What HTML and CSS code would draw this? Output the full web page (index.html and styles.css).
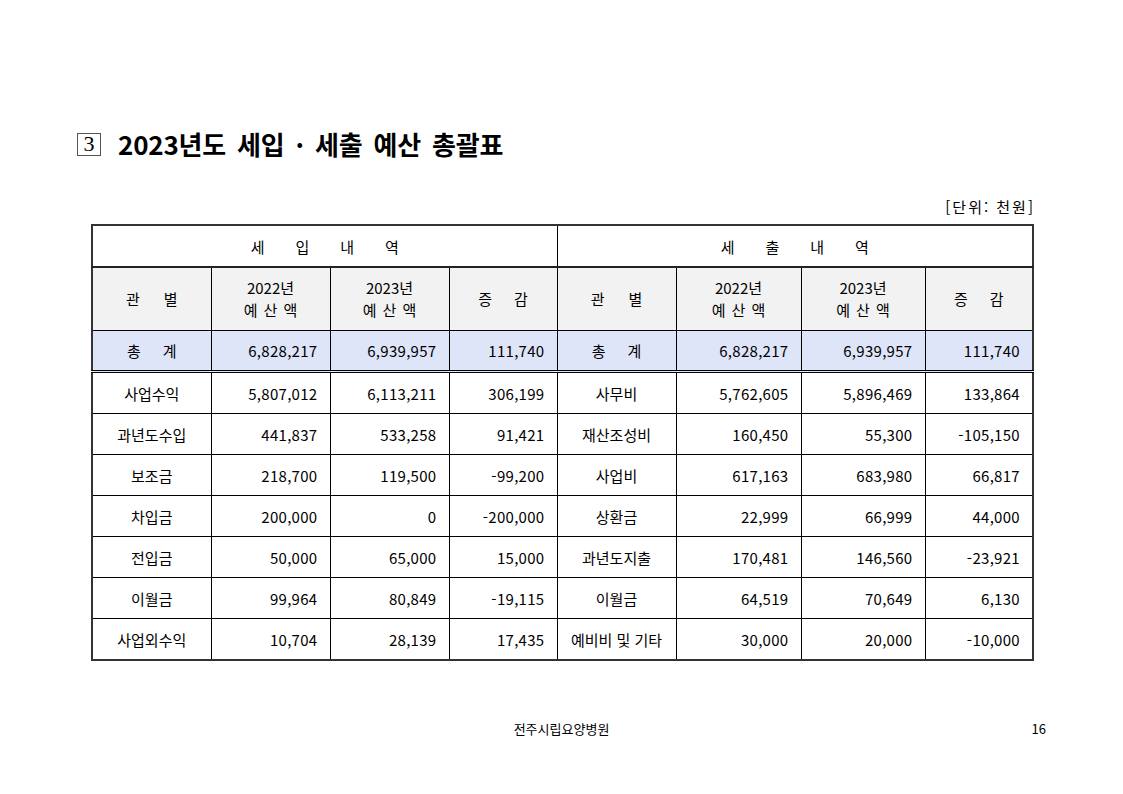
FILE: index.html
```html
<!DOCTYPE html>
<html lang="ko">
<head>
<meta charset="utf-8">
<title>2023년도 세입 · 세출 예산 총괄표</title>
<link rel="stylesheet" href="styles.css">
</head>
<body>
<div class="page">
  <h1 class="title"><span class="num-box">3</span><span class="title-text">2023년도 세입 · 세출 예산 총괄표</span></h1>
  <div class="unit">[단위: 천원]</div>
  <table class="budget">
    <colgroup>
      <col class="c1"><col class="c2"><col class="c3"><col class="c4">
      <col class="c5"><col class="c6"><col class="c7"><col class="c8">
    </colgroup>
    <thead>
      <tr class="sect">
        <th colspan="4"><span class="sp sp-wide"><span>세</span><span>입</span><span>내</span><span>역</span></span></th>
        <th colspan="4"><span class="sp sp-wide"><span>세</span><span>출</span><span>내</span><span>역</span></span></th>
      </tr>
      <tr class="head">
        <th><span class="sp sp-mid"><span>관</span><span>별</span></span></th>
        <th>2022년<br><span class="sp sp-small"><span>예</span><span>산</span><span>액</span></span></th>
        <th>2023년<br><span class="sp sp-small"><span>예</span><span>산</span><span>액</span></span></th>
        <th><span class="sp sp-mid2"><span>증</span><span>감</span></span></th>
        <th><span class="sp sp-mid"><span>관</span><span>별</span></span></th>
        <th>2022년<br><span class="sp sp-small"><span>예</span><span>산</span><span>액</span></span></th>
        <th>2023년<br><span class="sp sp-small"><span>예</span><span>산</span><span>액</span></span></th>
        <th><span class="sp sp-mid2"><span>증</span><span>감</span></span></th>
      </tr>
      <tr class="total">
        <td class="lbl"><span class="sp sp-mid2"><span>총</span><span>계</span></span></td>
        <td class="n">6,828,217</td>
        <td class="n">6,939,957</td>
        <td class="n">111,740</td>
        <td class="lbl"><span class="sp sp-mid2"><span>총</span><span>계</span></span></td>
        <td class="n">6,828,217</td>
        <td class="n">6,939,957</td>
        <td class="n">111,740</td>
      </tr>
    </thead>
    <tbody>
      <tr class="first">
        <td class="lbl">사업수익</td><td class="n">5,807,012</td><td class="n">6,113,211</td><td class="n">306,199</td>
        <td class="lbl">사무비</td><td class="n">5,762,605</td><td class="n">5,896,469</td><td class="n">133,864</td>
      </tr>
      <tr>
        <td class="lbl">과년도수입</td><td class="n">441,837</td><td class="n">533,258</td><td class="n">91,421</td>
        <td class="lbl">재산조성비</td><td class="n">160,450</td><td class="n">55,300</td><td class="n">-105,150</td>
      </tr>
      <tr>
        <td class="lbl">보조금</td><td class="n">218,700</td><td class="n">119,500</td><td class="n">-99,200</td>
        <td class="lbl">사업비</td><td class="n">617,163</td><td class="n">683,980</td><td class="n">66,817</td>
      </tr>
      <tr>
        <td class="lbl">차입금</td><td class="n">200,000</td><td class="n">0</td><td class="n">-200,000</td>
        <td class="lbl">상환금</td><td class="n">22,999</td><td class="n">66,999</td><td class="n">44,000</td>
      </tr>
      <tr>
        <td class="lbl">전입금</td><td class="n">50,000</td><td class="n">65,000</td><td class="n">15,000</td>
        <td class="lbl">과년도지출</td><td class="n">170,481</td><td class="n">146,560</td><td class="n">-23,921</td>
      </tr>
      <tr>
        <td class="lbl">이월금</td><td class="n">99,964</td><td class="n">80,849</td><td class="n">-19,115</td>
        <td class="lbl">이월금</td><td class="n">64,519</td><td class="n">70,649</td><td class="n">6,130</td>
      </tr>
      <tr>
        <td class="lbl">사업외수익</td><td class="n">10,704</td><td class="n">28,139</td><td class="n">17,435</td>
        <td class="lbl">예비비 및 기타</td><td class="n">30,000</td><td class="n">20,000</td><td class="n">-10,000</td>
      </tr>
    </tbody>
  </table>
  <footer class="footer">
    <span class="org">전주시립요양병원</span>
    <span class="pageno">16</span>
  </footer>
</div>
</body>
</html>
```

FILE: styles.css
```css
html, body {
  margin: 0;
  padding: 0;
  background: #fff;
}
body {
  font-family: "Noto Sans CJK KR", "Noto Sans", sans-serif;
  color: #000;
}
.page {
  width: 1123px;
  height: 794px;
  box-sizing: border-box;
  padding: 128px 91px 0 91px;
  position: relative;
}
.title {
  margin: 0 0 0 -14px;
  display: flex;
  align-items: center;
  gap: 17px;
  font-size: 26px;
  font-weight: 700;
  line-height: 32px;
  height: 32px;
}
.num-box {
  display: inline-flex;
  align-items: center;
  justify-content: center;
  width: 22px;
  height: 21px;
  border: 1px solid #555;
  font-family: "Liberation Serif", serif;
  font-weight: 400;
  font-size: 22px;
  line-height: 1;
}
.title-text {
  word-spacing: 4px;
  letter-spacing: -0.2px;
}
.unit {
  margin-top: 38px;
  text-align: right;
  font-size: 15px;
  line-height: 18px;
  letter-spacing: 2px;
  margin-right: -3px;
}
.budget {
  margin-top: 8px;
  width: 941px;
  border-collapse: collapse;
  table-layout: fixed;
  border: 2px solid #333;
  font-size: 15px;
}
.c1 { width: 119px; }
.c2 { width: 119px; }
.c3 { width: 119px; }
.c4 { width: 108px; }
.c5 { width: 119px; }
.c6 { width: 125px; }
.c7 { width: 124px; }
.c8 { width: 108px; }
.budget th, .budget td {
  border: 1px solid #000;
  padding: 0;
  font-weight: 400;
  text-align: center;
  vertical-align: middle;
}
.sect th {
  height: 40px;
  border-bottom: 2px solid #222;
}
.head th {
  height: 62px;
  background: #f2f2f2;
  line-height: 22px;
}
.total td {
  height: 39px;
  background: #dfe5f8;
  border-bottom: 3px double #000;
}
.budget tbody td {
  height: 40px;
}
.budget td.n {
  text-align: right;
  padding-right: 12px;
  letter-spacing: 0.3px;
}
.sp {
  display: inline-flex;
  justify-content: center;
}
.sp-wide { gap: 31px; }
.sp-mid { gap: 24px; }
.sp-mid2 { gap: 22px; }
.sp-small { gap: 6px; }
.footer {
  position: absolute;
  left: 0;
  right: 0;
  top: 720px;
  text-align: center;
  font-size: 13px;
  line-height: 18px;
}
.footer .pageno {
  position: absolute;
  right: 77px;
  top: 0;
  font-size: 13px;
}
```
